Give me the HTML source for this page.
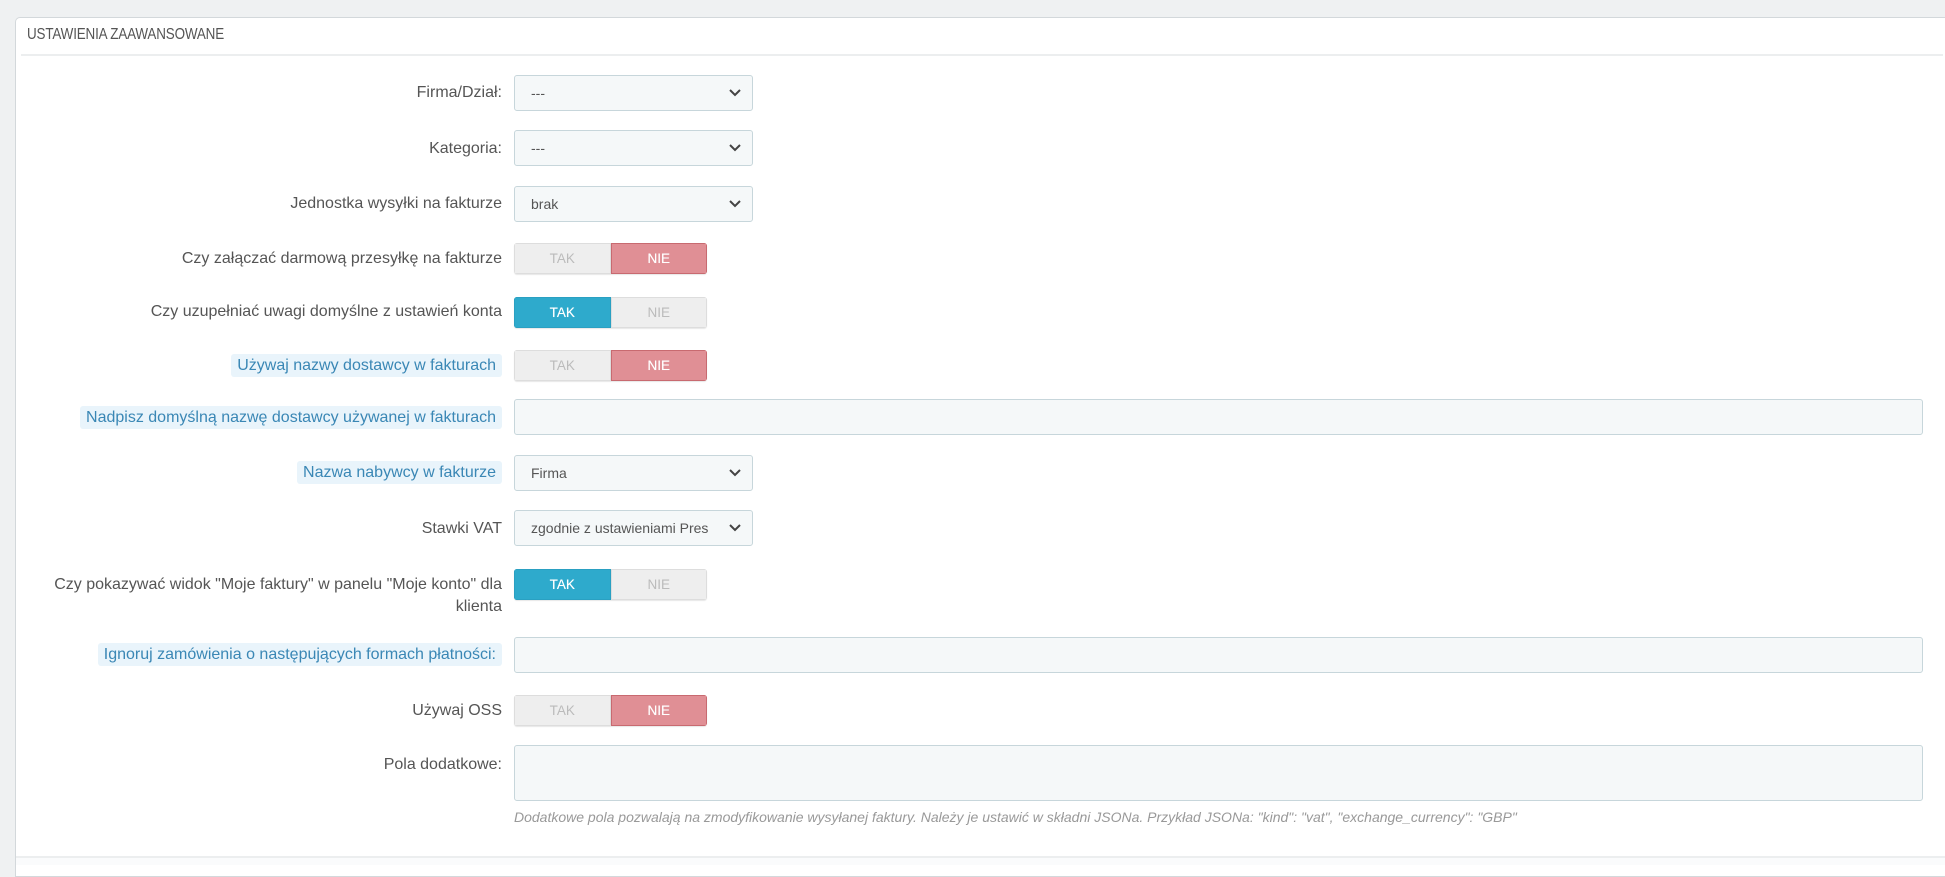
<!DOCTYPE html>
<html><head><meta charset="utf-8"><style>
*{box-sizing:border-box;margin:0;padding:0}
body{width:1945px;height:865px;background:#eff1f2;font-family:"Liberation Sans",sans-serif;position:relative;overflow:hidden}
.panel{position:absolute;left:15px;top:17px;width:1930px;height:860px;background:#fff;border:1px solid #d3d8db;border-radius:5px 0 0 0;border-right:none}
.hdr{position:absolute;left:27px;top:26px;font-size:16px;color:#555;transform:scaleX(.84);transform-origin:left;white-space:nowrap;letter-spacing:-.2px}
.sep{position:absolute;left:21px;top:54px;width:1922px;height:2px;background:#eceeef}
.foot{position:absolute;left:16px;top:856px;width:1929px;height:9px;background:#fafbfc;border-top:2px solid #eceeef}
.lab{position:absolute;right:1443px;font-size:16px;color:#555;text-align:right;white-space:nowrap;line-height:20px}
.hl{background:#e9f4fb;color:#3a87b5;padding:3px 6px;border-radius:3px}
.sel,.inp{position:absolute;left:514px;background:#f5f8f9;border:1px solid #c7d6db;border-radius:3px;font-size:14px;color:#555;padding-left:16px}
.sel{width:239px;height:36px;line-height:34px}
.sel svg{position:absolute;right:10px;top:12px}
.inp{width:1409px;height:36px}
.tg{position:absolute;left:514px;width:193px;height:31px;border-radius:3px;overflow:hidden;display:flex;font-size:13.5px;box-shadow:0 1px 1px rgba(0,0,0,.1)}
.tg div{flex:1;text-align:center;line-height:29px}
.off{background:#eee;color:#bbb;border:1px solid #ddd}
.yes{background:#2eaacc;color:#fff;border:1px solid #2aa0c2;text-shadow:0 0 .4px #fff}
.no{background:#e08f95;color:#fff;border:1px solid #c86a70;text-shadow:0 0 .4px #fff}
.help{position:absolute;left:514px;top:809px;font-size:14px;font-style:italic;color:#999;white-space:nowrap}
</style></head><body>
<div class="panel"></div>
<div class="hdr">USTAWIENIA ZAAWANSOWANE</div>
<div class="sep"></div>

<div class="lab" style="top:83px">Firma/Dział:</div>
<div class="sel" style="top:75px">---<svg width="14" height="10" viewBox="0 0 14 10"><path d="M2 2l5 5 5-5" stroke="#444" stroke-width="2" fill="none"/></svg></div>

<div class="lab" style="top:139px">Kategoria:</div>
<div class="sel" style="top:130px">---<svg width="14" height="10" viewBox="0 0 14 10"><path d="M2 2l5 5 5-5" stroke="#444" stroke-width="2" fill="none"/></svg></div>

<div class="lab" style="top:194px">Jednostka wysyłki na fakturze</div>
<div class="sel" style="top:186px">brak<svg width="14" height="10" viewBox="0 0 14 10"><path d="M2 2l5 5 5-5" stroke="#444" stroke-width="2" fill="none"/></svg></div>

<div class="lab" style="top:249px">Czy załączać darmową przesyłkę na fakturze</div>
<div class="tg" style="top:243px"><div class="off">TAK</div><div class="no">NIE</div></div>

<div class="lab" style="top:302px">Czy uzupełniać uwagi domyślne z ustawień konta</div>
<div class="tg" style="top:297px"><div class="yes">TAK</div><div class="off">NIE</div></div>

<div class="lab" style="top:356px"><span class="hl">Używaj nazwy dostawcy w fakturach</span></div>
<div class="tg" style="top:350px"><div class="off">TAK</div><div class="no">NIE</div></div>

<div class="lab" style="top:408px"><span class="hl">Nadpisz domyślną nazwę dostawcy używanej w fakturach</span></div>
<div class="inp" style="top:399px"></div>

<div class="lab" style="top:463px"><span class="hl">Nazwa nabywcy w fakturze</span></div>
<div class="sel" style="top:455px">Firma<svg width="14" height="10" viewBox="0 0 14 10"><path d="M2 2l5 5 5-5" stroke="#444" stroke-width="2" fill="none"/></svg></div>

<div class="lab" style="top:519px">Stawki VAT</div>
<div class="sel" style="top:510px;overflow:hidden;white-space:nowrap">zgodnie z ustawieniami Pres<svg width="14" height="10" viewBox="0 0 14 10" style="background:#f5f8f9"><path d="M2 2l5 5 5-5" stroke="#444" stroke-width="2" fill="none"/></svg></div>

<div class="lab" style="top:574px;line-height:22px">Czy pokazywać widok "Moje faktury" w panelu "Moje konto" dla<br>klienta</div>
<div class="tg" style="top:569px"><div class="yes">TAK</div><div class="off">NIE</div></div>

<div class="lab" style="top:645px"><span class="hl">Ignoruj zamówienia o następujących formach płatności:</span></div>
<div class="inp" style="top:637px"></div>

<div class="lab" style="top:701px">Używaj OSS</div>
<div class="tg" style="top:695px"><div class="off">TAK</div><div class="no">NIE</div></div>

<div class="lab" style="top:755px">Pola dodatkowe:</div>
<div class="inp" style="top:745px;height:56px"></div>
<div class="help">Dodatkowe pola pozwalają na zmodyfikowanie wysyłanej faktury. Należy je ustawić w składni JSONa. Przykład JSONa: "kind": "vat", "exchange_currency": "GBP"</div>

<div class="foot"></div>
</body></html>
